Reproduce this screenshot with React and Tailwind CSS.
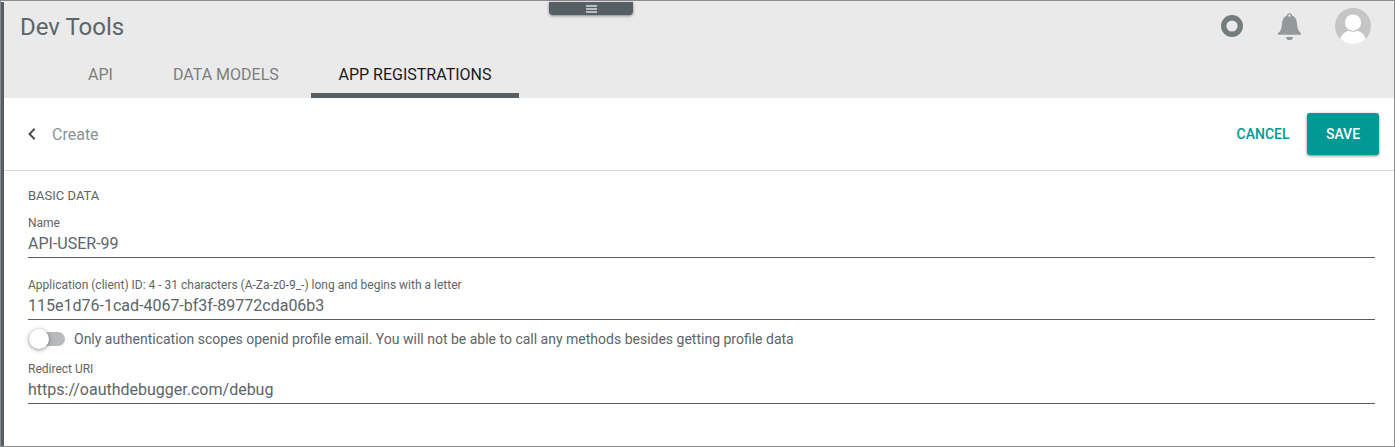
function Field({ label, value, className }) {
  return (
    <div className={`flex h-[46px] flex-col border-b border-[#566064] pt-[2px] ${className}`}>
      <span className="h-[18px] text-xs leading-[18px]">{label}</span>
      <span className="h-6 text-base leading-6">{value}</span>
    </div>
  );
}

function TopHandle() {
  return (
    <div className="absolute left-[548px] top-px flex h-[13px] w-[84px] justify-center rounded-b bg-[#566064] pt-[3px] shadow-[0_1px_3px_rgba(0,0,0,0.45)]">
      <div className="flex w-[11px] flex-col gap-px">
        <span className="h-[2px] bg-[#b9bec0]" />
        <span className="h-[2px] bg-[#b9bec0]" />
        <span className="h-[2px] bg-[#b9bec0]" />
      </div>
    </div>
  );
}

function Bell() {
  return (
    <svg className="ml-[35px] mt-[2px] h-7 w-6" viewBox="0 0 24 28" fill="#949a9b">
      <path
        fillRule="evenodd"
        d="M11.5 0.2a2.6 2.6 0 0 1 2.6 2.4C17.3 3.7 18.7 6.8 19 10.5C19.3 15.2 20.1 18 23 20.2V21.8H0V20.2C2.9 18 3.7 15.2 4 10.5C4.3 6.8 5.7 3.7 8.9 2.6A2.6 2.6 0 0 1 11.5 .2ZM11.5 1.4a1.2 1.2 0 1 0 0 2.4a1.2 1.2 0 0 0 0-2.4Z"
      />
      <path d="M8 23.9h7a3.5 3.1 0 0 1-7 0Z" />
    </svg>
  );
}

function Avatar() {
  return (
    <svg className="ml-[33px] size-9" viewBox="0 0 36 36">
      <defs>
        <clipPath id="avatar-clip">
          <circle cx="18" cy="18" r="18" />
        </clipPath>
      </defs>
      <g clipPath="url(#avatar-clip)">
        <rect width="36" height="36" fill="#c5c5c5" />
        <ellipse cx="18" cy="33.5" rx="13" ry="11.5" fill="#fff" />
        <circle cx="18" cy="14.6" r="9.4" fill="#c5c5c5" />
        <circle cx="18" cy="14.6" r="8.1" fill="#fff" />
      </g>
    </svg>
  );
}

export default function App() {
  return (
    <div className="relative flex h-[447px] w-[1395px] border border-[#8c8a8c] bg-white font-[Roboto,sans-serif] text-[#5c6569]">
      <div className="mt-px w-[3px] shrink-0 bg-[#566064]" />
      <div className="flex min-w-0 flex-1 flex-col">
        <header className="flex h-[97px] shrink-0 flex-col bg-[#eaeaea]">
          <div className="flex h-[51px] items-start justify-between pl-4 pr-[23px]">
            <h1 className="pt-[10px] text-2xl leading-8">Dev Tools</h1>
            <div className="flex items-center pt-[7px]">
              <svg className="size-[22px]" viewBox="0 0 22 22">
                <circle cx="11" cy="11" r="8.3" fill="none" stroke="#757c7e" strokeWidth="5.4" />
              </svg>
              <Bell />
              <Avatar />
            </div>
          </div>
          <nav className="flex h-[46px] pl-[56px] text-base leading-[46px] text-[#7e7e7e]">
            <a className="w-[81px] pl-7">API</a>
            <a className="w-[169.5px] pl-8">DATA MODELS</a>
            <a className="w-[208.5px] border-b-5 border-[#566064] pl-7 text-[#1a1a1a]">APP REGISTRATIONS</a>
          </nav>
        </header>
        <div className="flex h-[73px] shrink-0 items-center border-b border-[#d9dbdc] pl-6 pr-[15px]">
          <svg className="h-3 w-2" viewBox="0 0 8 12" fill="none" stroke="#465054" strokeWidth="2">
            <path d="M6.7 0.8L1.5 6L6.7 11.2" />
          </svg>
          <span className="ml-4 pt-[2px] text-base text-[#8c9294]">Create</span>
          <div className="ml-auto flex items-center text-sm font-medium">
            <button className="mr-[17.5px] text-[#009993]">CANCEL</button>
            <button className="h-[42px] w-[72px] rounded-[3px] bg-[#009993] text-white shadow-[0_1px_3px_rgba(0,0,0,0.5)]">
              SAVE
            </button>
          </div>
        </div>
        <main className="flex flex-col pl-6 pr-[19px] pt-[15px]">
          <h2 className="h-5 text-[13px] leading-5">BASIC DATA</h2>
          <Field className="mt-[6px]" label="Name" value="API-USER-99" />
          <Field
            className="mt-4"
            label="Application (client) ID: 4 - 31 characters (A-Za-z0-9_-) long and begins with a letter"
            value="115e1d76-1cad-4067-bf3f-89772cda06b3"
          />
          <div className="flex h-[38px] items-center">
            <div className="flex h-[14px] w-[37px] items-center pl-px">
              <div className="relative z-10 size-5 shrink-0 rounded-full bg-white shadow-[0_1px_4px_rgba(0,0,0,0.45)]" />
              <div className="-ml-5 h-[14px] w-9 shrink-0 rounded-full bg-[#b6babb]" />
            </div>
            <span className="ml-[9px] text-sm">
              Only authentication scopes openid profile email. You will not be able to call any methods besides getting profile data
            </span>
          </div>
          <Field label="Redirect URI" value="https://oauthdebugger.com/debug" className="" />
        </main>
      </div>
      <TopHandle />
    </div>
  );
}
